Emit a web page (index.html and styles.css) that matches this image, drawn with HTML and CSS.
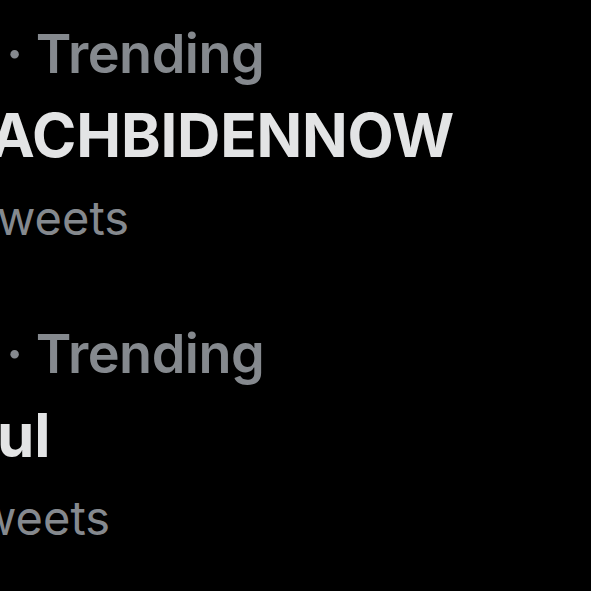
FILE: index.html
```html
<!DOCTYPE html>
<html lang="en">
<head>
<meta charset="utf-8">
<title>Trending</title>
<link rel="stylesheet" href="styles.css">
</head>
<body>
<main class="list">
  <section class="trend">
    <div class="meta meta-a">· Trending</div>
    <div class="name name-a">ACHBIDENNOW</div>
    <div class="count count-a">weets</div>
  </section>
  <section class="trend">
    <div class="meta meta-b">· Trending</div>
    <div class="name name-b">ul</div>
    <div class="count count-b">weets</div>
  </section>
</main>
</body>
</html>
```
FILE: styles.css
```css
html, body {
  margin: 0;
  padding: 0;
  background: #000;
  width: 591px;
  height: 591px;
  overflow: hidden;
}
.list {
  display: flex;
  flex-direction: column;
  padding-top: 19px;
  font-family: Inter, "Noto Sans", sans-serif;
  white-space: nowrap;
}
.trend {
  display: flex;
  flex-direction: column;
  height: 300px;
}
.meta {
  color: #85898e;
  font-size: 54px;
  font-weight: 600;
  line-height: 70px;
  letter-spacing: -0.5px;
}
.name {
  color: #e3e4e5;
  font-size: 60px;
  font-weight: 700;
  line-height: 82px;
  padding-top: 5px;
  letter-spacing: -0.2px;
}
.count {
  color: #85898e;
  font-size: 47px;
  font-weight: 400;
  line-height: 76px;
  padding-top: 4px;
}
.meta-a, .meta-b { margin-left: 6px; }
.name-a { margin-left: -10px; }
.name-b { margin-left: -3px; }
.count-a { margin-left: -3px; }
.count-b { margin-left: -22px; }
```
